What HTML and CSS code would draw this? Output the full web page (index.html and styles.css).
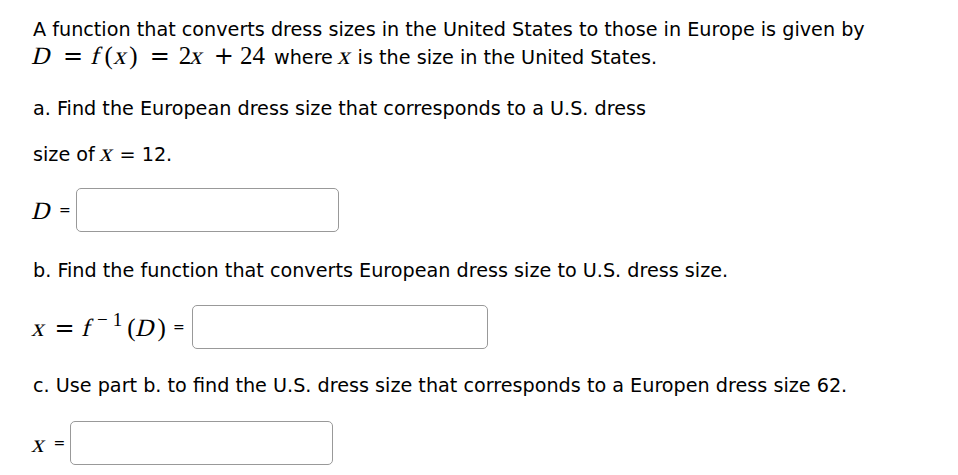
FILE: index.html
```html
<!DOCTYPE html>
<html>
<head>
<meta charset="utf-8">
<link rel="stylesheet" href="styles.css">
</head>
<body>
<div class="page">
  <p class="intro">A function that converts dress sizes in the United States to those in Europe is given by<br>
  <span class="math"><i>D</i><span class="rel">=</span><i class="fn">f</i>(<i class="var">x</i>)<span class="rel">=</span><span class="num">2</span><i>x</i><span class="bin">+</span><span class="num24">24</span></span> where <span class="math"><i>x</i></span> is the size in the United States.</p>

  <p class="part part-a">a. Find the European dress size that corresponds to a U.S. dress<br>size of <span class="math"><i>x</i></span> = 12.</p>

  <div class="answer answer-a">
    <span class="math"><i>D</i></span><span class="eq">=</span><span class="box"></span>
  </div>

  <p class="part part-b">b. Find the function that converts European dress size to U.S. dress size.</p>

  <div class="answer answer-b">
    <span class="math"><i>x</i><span class="rel rel-b">=</span><i class="fn fn-b">f</i><sup class="sup"><span class="minus">&minus;</span>1</sup><span class="paren">(</span><i class="var-d">D</i>)</span><span class="eq">=</span><span class="box"></span>
  </div>

  <p class="part part-c">c. Use part b. to find the U.S. dress size that corresponds to a Europen dress size 62.</p>

  <div class="answer answer-c">
    <span class="math"><i>x</i></span><span class="eq">=</span><span class="box"></span>
  </div>
</div>
</body>
</html>
```

FILE: styles.css
```css
html, body {
  margin: 0;
  padding: 0;
  background: #ffffff;
}

.page {
  padding: 17px 0 0 33px;
  font-family: "DejaVu Sans", Verdana, sans-serif;
  font-size: 19.2px;
  color: #000000;
}

p {
  margin: 0;
}

.intro {
  line-height: 26px;
}

.math {
  font-family: "Liberation Serif", serif;
  font-size: 25px;
  line-height: 1;
}

.math i {
  display: inline-block;
  font-style: normal;
  transform: skewX(-14deg);
}

.rel,
.bin {
  font-family: "DejaVu Serif", serif;
  font-size: 24px;
}

.rel {
  margin: 0 9px 0 12px;
}

.rel-b {
  margin: 0 8px 0 9px;
}

.bin {
  margin: 0 6px 0 10px;
}

.fn {
  margin-right: 4px;
}

.fn-b {
  margin-right: 2px;
}

.var {
  margin: 0 2px;
}

.num24 {
  margin-right: 3px;
}

.sup {
  font-size: 19px;
  vertical-align: 10px;
  line-height: 0;
  margin-left: 4px;
}

.minus {
  margin-right: 5px;
}

.paren {
  margin-left: 5px;
}

.var-d {
  margin: 0 2px;
}

.part-a {
  margin-top: 15px;
  line-height: 46px;
}

.answer {
  display: flex;
  align-items: center;
  height: 44px;
}

.answer .eq {
  font-size: 14px;
  margin: 0 5px 0 8px;
}

.answer-b .eq {
  margin: 0 7px 0 7px;
}

.box {
  display: block;
  box-sizing: border-box;
  height: 44px;
  border: 1px solid #999999;
  border-radius: 5px;
  background: #ffffff;
}

.answer-a {
  margin-top: 10px;
}

.answer-a .box {
  width: 263px;
}

.part-b {
  margin-top: 26px;
  line-height: 26px;
}

.answer-b {
  margin-top: 21px;
}

.answer-b .box {
  width: 296px;
}

.part-c {
  margin-top: 24px;
  line-height: 26px;
}

.answer-c {
  margin-top: 22px;
}

.answer-c .box {
  width: 263px;
}
```
